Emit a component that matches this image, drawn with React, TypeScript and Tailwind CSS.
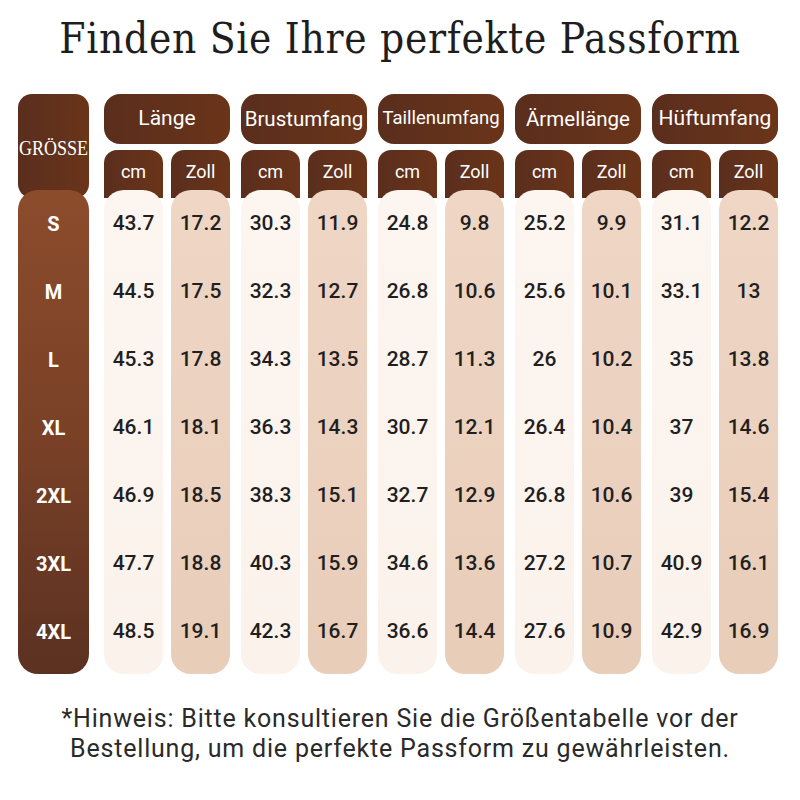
import React from "react";

const groups = [
  { name: "Länge", size: "text-[21px]" },
  { name: "Brustumfang", size: "text-[20.5px]" },
  { name: "Taillenumfang", size: "text-[18.5px]" },
  { name: "Ärmellänge", size: "text-[20.5px]" },
  { name: "Hüftumfang", size: "text-[21px]" },
];

const sizes = ["S", "M", "L", "XL", "2XL", "3XL", "4XL"];

const data: string[][] = [
  ["43.7", "17.2", "30.3", "11.9", "24.8", "9.8", "25.2", "9.9", "31.1", "12.2"],
  ["44.5", "17.5", "32.3", "12.7", "26.8", "10.6", "25.6", "10.1", "33.1", "13"],
  ["45.3", "17.8", "34.3", "13.5", "28.7", "11.3", "26", "10.2", "35", "13.8"],
  ["46.1", "18.1", "36.3", "14.3", "30.7", "12.1", "26.4", "10.4", "37", "14.6"],
  ["46.9", "18.5", "38.3", "15.1", "32.7", "12.9", "26.8", "10.6", "39", "15.4"],
  ["47.7", "18.8", "40.3", "15.9", "34.6", "13.6", "27.2", "10.7", "40.9", "16.1"],
  ["48.5", "19.1", "42.3", "16.7", "36.6", "14.4", "27.6", "10.9", "42.9", "16.9"],
];

function DataColumn({ label, col, zoll }: { label: string; col: number; zoll: boolean }) {
  return (
    <div className="flex flex-col w-[59px]">
      <div className="h-[48px] pb-[6px] rounded-t-[13px] bg-gradient-to-r from-[#5a2e1d] to-[#6a3419] flex items-center justify-center text-white text-[18px] font-['Roboto',sans-serif]">
        {label}
      </div>
      <div
        className={
          "relative -mt-[8px] rounded-[20px] pb-[8px] flex flex-col " +
          (zoll
            ? "bg-gradient-to-b from-[#efd6c5] to-[#e8cdb9]"
            : "bg-gradient-to-b from-[#fdf5ef] to-[#fbf2ec]")
        }
      >
        {data.map((row, i) => (
          <div
            key={i}
            className="h-[68px] flex items-center justify-center text-[21px] font-medium text-[#1f1f1f] font-['Roboto',sans-serif]"
          >
            {row[col]}
          </div>
        ))}
      </div>
    </div>
  );
}

export default function App() {
  return (
    <div className="w-[800px] h-[800px] bg-white flex flex-col items-center">
      <h1 className="mt-[11px] h-[69px] text-[42px] leading-[56px] text-[#1e1e1e] font-['DejaVu_Serif',serif] [font-stretch:condensed] tracking-[0.7px] text-center whitespace-nowrap">
        Finden Sie Ihre perfekte Passform
      </h1>
      <div className="mt-[14px] flex gap-[15px] self-start ml-[18px]">
        <div className="flex flex-col w-[71px]">
          <div className="h-[104px] pt-[4px] rounded-[14px] bg-gradient-to-r from-[#5a2e1d] to-[#6a3419] flex items-center justify-center text-white text-[18px] font-['Liberation_Serif',serif]">
            <span className="inline-block scale-y-[1.15]">GRÖSSE</span>
          </div>
          <div className="relative -mt-[8px] rounded-[20px] pb-[8px] flex flex-col bg-gradient-to-b from-[#8c4c2c] via-[#7a4127] to-[#5b3121]">
            {sizes.map((s) => (
              <div
                key={s}
                className="h-[68px] flex items-center justify-center text-white text-[20px] font-bold font-['Roboto',sans-serif]"
              >
                {s}
              </div>
            ))}
          </div>
        </div>
        <div className="flex gap-[11px]">
          {groups.map((g, gi) => (
            <div key={g.name} className="flex flex-col w-[126px]">
              <div
                className={
                  "h-[50px] rounded-[16px] bg-gradient-to-r from-[#5a2e1d] to-[#6a3419] flex items-center justify-center text-white font-['Roboto',sans-serif] whitespace-nowrap " +
                  g.size
                }
              >
                {g.name}
              </div>
              <div className="mt-[6px] flex gap-[8px]">
                <DataColumn label="cm" col={gi * 2} zoll={false} />
                <DataColumn label="Zoll" col={gi * 2 + 1} zoll={true} />
              </div>
            </div>
          ))}
        </div>
      </div>
      <p className="mt-[30px] text-[25px] leading-[30px] tracking-[0.8px] text-[#2a2a2a] text-center whitespace-nowrap font-['Roboto',sans-serif]">
        *Hinweis: Bitte konsultieren Sie die Größentabelle vor der
        <br />
        Bestellung, um die perfekte Passform zu gewährleisten.
      </p>
    </div>
  );
}
